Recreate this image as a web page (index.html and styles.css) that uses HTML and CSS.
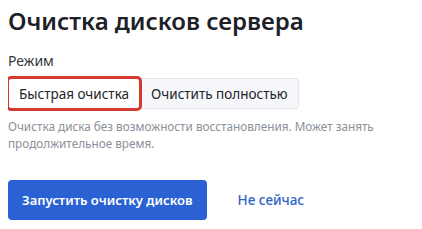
FILE: index.html
```html
<!DOCTYPE html>
<html lang="ru">
<head>
    <meta charset="UTF-8">
    <meta name="viewport" content="width=device-width, initial-scale=1.0">
    <title>Очистка дисков</title>
    <link rel="stylesheet" href="styles.css">
</head>
<body>
    <main class="dialog">
        <h1>Очистка дисков сервера</h1>
        <section class="campo">
            <p class="rotulo">Режим</p>
            <div class="modos">
                <button class="modo ativo">Быстрая очистка</button>
                <button class="modo">Очистить полностью</button>
            </div>
            <p class="ajuda">Очистка диска без возможности восстановления. Может занять продолжительное время.</p>
        </section>
        <section class="acoes">
            <button class="primario">Запустить очистку дисков</button>
            <button class="link">Не сейчас</button>
        </section>
    </main>
</body>
</html>
```

FILE: styles.css
```css
* {
    font-family: 'Noto Sans', 'Open Sans', sans-serif;
    box-sizing: border-box;
}
body {
    margin: 8px;
    background: #fff;
    color: #1f2329;
}
h1 {
    margin: 0;
    font-size: 24px;
    line-height: 26px;
    font-weight: 600;
    color: #1d2127;
}
.campo {
    margin-top: 18px;
}
.rotulo {
    margin: 0 0 8px;
    font-size: 14px;
    line-height: 18px;
    color: #333840;
}
.modos {
    display: flex;
    align-items: center;
}
.modo {
    height: 31px;
    padding: 0 10px;
    font-size: 13.5px;
    color: #1f2329;
    background: #f5f7fa;
    border: 1px solid #e4e7ec;
    border-radius: 3px;
}
.modo.ativo {
    background: #fff;
    outline: 3px solid #d63a2f;
    outline-offset: -1px;
    position: relative;
    z-index: 1;
}
.ajuda {
    margin: 9px 0 0;
    font-size: 11.75px;
    line-height: 17px;
    color: #8b9099;
    max-width: 380px;
}
.acoes {
    display: flex;
    align-items: center;
    gap: 15px;
    margin-top: 28px;
}
.primario {
    height: 40px;
    padding: 0 14px;
    font-size: 13px;
    font-weight: 600;
    color: #fff;
    background: #2b62d3;
    border: none;
    border-radius: 4px;
}
.link {
    padding: 0 16px;
    font-size: 13.5px;
    font-weight: 500;
    color: #2f63c6;
    background: none;
    border: none;
}
```
